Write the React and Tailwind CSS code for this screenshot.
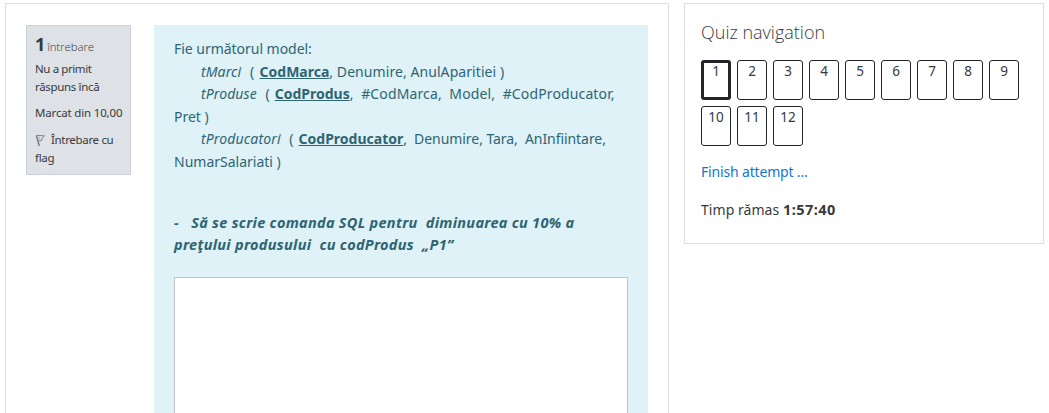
const questions = [1, 2, 3, 4, 5, 6, 7, 8, 9, 10, 11, 12];

function FlagIcon() {
  return (
    <svg className="mr-[5px] mt-[3px] shrink-0" width="11" height="13" viewBox="0 0 11 13" fill="none" stroke="#777b7f" strokeWidth="1">
      <path d="M1.3 1.5 L4.3 12" strokeWidth="1.4" />
      <path d="M1.6 1.3 L9.5 1.9 L6.6 4.4 L7 6.3 L3.2 7.3" strokeWidth="0.9" />
      <path d="M3.6 2.6 L4.8 5.8" stroke="#aaaeb2" />
    </svg>
  );
}

function QuestionInfo() {
  return (
    <aside className="h-[150px] w-[105px] shrink-0 border border-[#cad0d7] bg-[#dee2e6] pl-2 text-[11.5px] leading-[18px] tracking-[-0.17px] whitespace-nowrap text-[#373a3c]">
      <h3 className="mt-[6px] flex h-[24px] items-baseline gap-[2px] leading-[24px]">
        <span className="text-[18px] font-bold">1</span>
        <span className="font-['Open_Sans',sans-serif] text-[11.5px] font-light tracking-[-0.1px]">întrebare</span>
      </h3>
      <div className="mt-[4px]">
        <div className="tracking-[-0.4px]">Nu a primit</div>
        <div className="tracking-[-0.33px]">răspuns încă</div>
      </div>
      <div className="mt-[8px]">Marcat din 10,00</div>
      <div className="mt-[9px] tracking-[-0.33px]">
        <div className="flex"><FlagIcon />Întrebare cu</div>
        <div>flag</div>
      </div>
    </aside>
  );
}

function Key({ children }) {
  return <b className="font-bold tracking-normal underline">{children}</b>;
}

function QuestionBody() {
  return (
    <section className="h-[388px] w-[494px] shrink-0 bg-[#def2f8] px-[20px] pt-[13px] text-[14px] leading-[22.5px] whitespace-pre text-[#2f6473]">
      <div className="tracking-[-0.03px]">Fie următorul model:</div>
      <div className="pl-[27px]"><i className="tracking-[0.1px]">tMarci</i><span className="tracking-[0.8px]">{"  ( "}</span><Key>CodMarca</Key><span className="tracking-[0.07px]">{", Denumire, AnulAparitiei )"}</span></div>
      <div className="pl-[27px]"><i className="tracking-[0.1px]">tProduse</i><span className="tracking-[0.7px]">{"  ( "}</span><Key>CodProdus</Key><span className="tracking-[0.13px]">{",  #CodMarca,  Model,  #CodProducator,"}</span></div>
      <div>Pret )</div>
      <div className="pl-[27px]"><i className="tracking-[0.14px]">tProducatori</i><span className="tracking-[0.7px]">{"  ( "}</span><Key>CodProducator</Key><span className="tracking-[-0.06px]">{",  Denumire, Tara,  AnInfiintare,"}</span></div>
      <div>NumarSalariati )</div>
      <div className="mt-[37.5px] text-[14.5px] font-bold tracking-[0.29px] italic">{"-   Să se scrie comanda SQL pentru  diminuarea cu 10% a"}</div>
      <div className="text-[14.5px] font-bold tracking-[0.29px] italic">{"preţului produsului  cu codProdus  „P1”"}</div>
      <div className="mt-[21px] h-[160px] w-[454px] border border-[#c4c4c4] bg-white" />
    </section>
  );
}

function QuizNavigation() {
  return (
    <aside className="h-[241px] w-[360px] shrink-0 border border-[#dedede] pt-[16px] pl-4 text-[14px] leading-[22px] text-[#373a3c]">
      <h2 className="font-['Open_Sans',sans-serif] text-[18px] leading-[24px] font-light">Quiz navigation</h2>
      <div className="mt-[16px] flex flex-wrap gap-[6px]">
        {questions.map((n) => (
          <div key={n} className={n === 1 ? "h-10 w-[30px] rounded-[3px] border-[3px] border-[#212529] text-center text-[13.5px] leading-[16px]" : "h-10 w-[30px] rounded-[3px] border border-[#212529] pt-[2px] text-center text-[13.5px] leading-[16px]"}>{n}</div>
        ))}
      </div>
      <div className="mt-[15px] tracking-[-0.17px] text-[#1177d1]">Finish attempt ...</div>
      <div className="mt-[15px]"><span className="tracking-[0.05px]">Timp rămas </span><b className="text-[14.5px] tracking-[0.45px]">1:57:40</b></div>
    </aside>
  );
}

export default function App() {
  return (
    <div className="flex h-[413px] w-[1049px] items-start gap-[15px] overflow-hidden bg-white pt-[3px] pl-[5px] font-['Noto_Sans','Open_Sans',sans-serif]">
      <main className="flex h-[430px] w-[664px] shrink-0 items-start gap-[23px] border border-[#dedede] pt-[21px] pl-[20px]">
        <QuestionInfo />
        <QuestionBody />
      </main>
      <QuizNavigation />
    </div>
  );
}
